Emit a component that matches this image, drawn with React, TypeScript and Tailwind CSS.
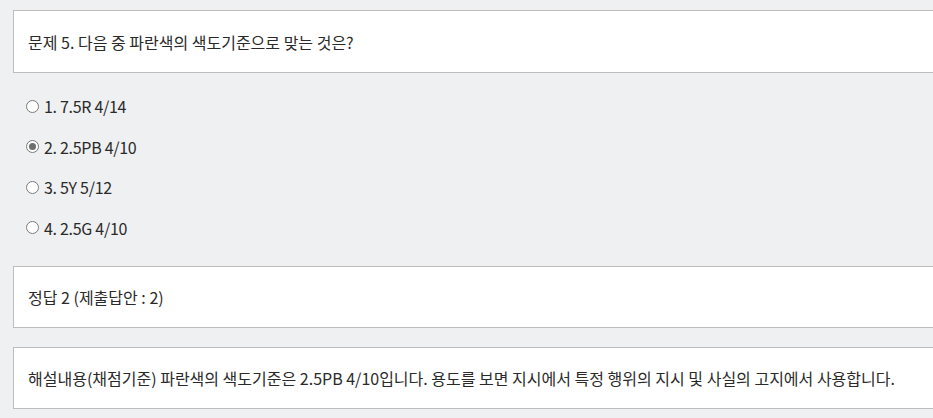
import React from 'react';

const options = [
  { no: 1, label: '7.5R 4/14' },
  { no: 2, label: '2.5PB 4/10' },
  { no: 3, label: '5Y 5/12' },
  { no: 4, label: '2.5G 4/10' },
];

const selected = 2;

function Radio({ checked }: { checked: boolean }) {
  return (
    <span className="flex h-[13px] w-[13px] shrink-0 items-center justify-center rounded-full border border-[#7a7a7a] bg-white">
      {checked && <span className="h-[7px] w-[7px] rounded-full bg-[#6e6e6e]" />}
    </span>
  );
}

function Box({ children }: { children: React.ReactNode }) {
  return (
    <div className="ml-[13px] flex h-[62px] w-[940px] items-center border border-[#bdbdbd] bg-white pl-[14px] text-[16px] text-[#2a2a2a]">
      {children}
    </div>
  );
}

export default function App() {
  return (
    <div
      className="h-[418px] w-[933px] overflow-hidden bg-[#eff0f2] pt-[10px]"
      style={{ fontFamily: '"Noto Sans CJK KR", "Noto Sans", sans-serif' }}
    >
      <div className="ml-[13px] flex h-[63px] w-[940px] items-center border border-[#bdbdbd] bg-white pl-[14px] text-[16px] text-[#2a2a2a]">
        문제 5. 다음 중 파란색의 색도기준으로 맞는 것은?
      </div>

      <ul className="pt-[13px] pb-[18px]">
        {options.map((o) => (
          <li key={o.no} className="flex h-[40.5px] items-center gap-[5px] pl-[26px] text-[16px] tracking-[-0.3px] text-[#2a2a2a]">
            <Radio checked={o.no === selected} />
            <span>
              {o.no}. {o.label}
            </span>
          </li>
        ))}
      </ul>

      <Box>정답 2 (제출답안 : 2)</Box>

      <div className="h-[19px]" />

      <Box>
        해설내용(채점기준) 파란색의 색도기준은 2.5PB 4/10입니다. 용도를 보면 지시에서 특정 행위의 지시 및 사실의 고지에서 사용합니다.
      </Box>
    </div>
  );
}
